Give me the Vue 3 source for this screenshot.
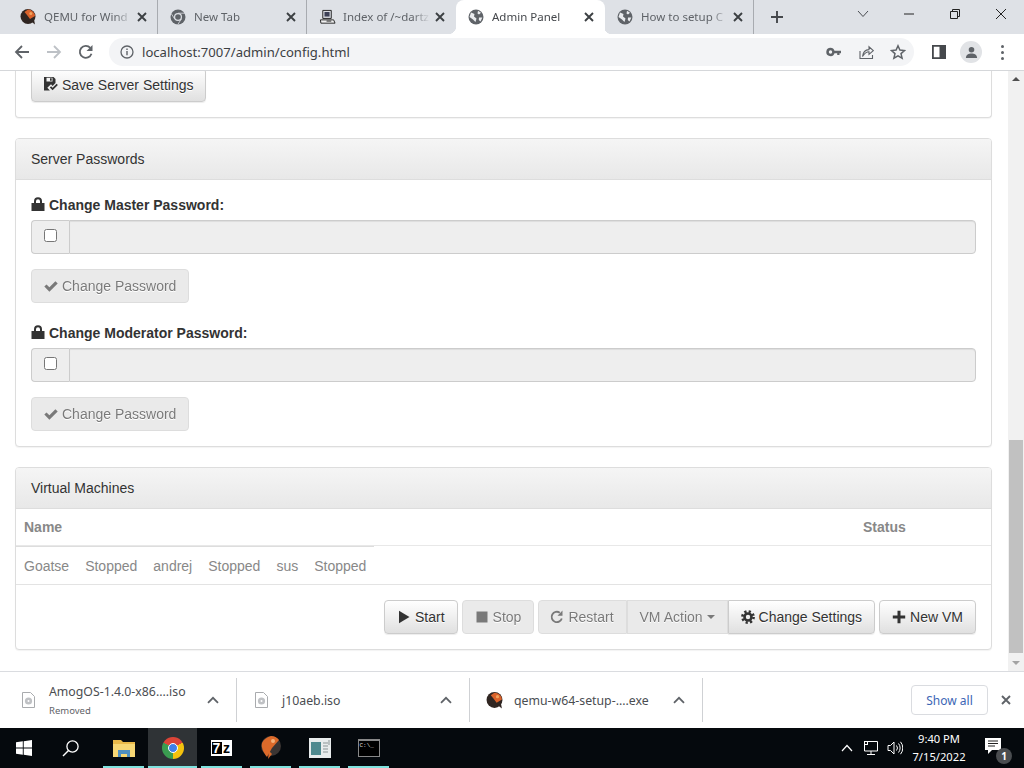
<script setup>
const tabs = [
  { title: 'QEMU for Wind', icon: 'qemu' },
  { title: 'New Tab', icon: 'chromeg' },
  { title: 'Index of /~dartz', icon: 'computer' },
  { title: 'Admin Panel', icon: 'globe', active: true },
  { title: 'How to setup C', icon: 'globe' },
]
const sections = ['Master', 'Moderator']
const cells = ['Goatse', 'Stopped', 'andrej', 'Stopped', 'sus', 'Stopped']
const downloads = [
  { name: 'AmogOS-1.4.0-x86....iso', note: 'Removed', icon: 'disc' },
  { name: 'j10aeb.iso', icon: 'disc' },
  { name: 'qemu-w64-setup-....exe', icon: 'qemu' },
]
</script>

<template>
  <div class="screen">
    <svg class="defs" aria-hidden="true">
      <symbol id="g-lock" viewBox="0 0 14 14"><path fill-rule="evenodd" d="M3 6V4.200a4 4 0 0 1 8 0V6h2.500v8H.5V6zM5 6h4V4.200a2 2 0 0 0-4 0z" fill="currentColor"/></symbol>
      <symbol id="g-check" viewBox="0 0 14 14"><path d="M.3 7.600l2.200-2.200 2.900 2.900L11.400 2.300 13.700 4.600 5.400 12.800z" fill="currentColor"/></symbol>
      <symbol id="g-play" viewBox="0 0 14 14"><path d="M2 .8l10.500 6.200L2 13.200z" fill="currentColor"/></symbol>
      <symbol id="g-stop" viewBox="0 0 14 14"><rect x="1.500" y="1.500" width="11" height="11" fill="currentColor"/></symbol>
      <symbol id="g-refresh" viewBox="0 0 14 14"><path d="M11.800 8.500A5.200 5.200 0 1 1 9.800 2.700" fill="none" stroke="currentColor" stroke-width="1.800"/><path d="M12.500 .6v5.200H7.500z" fill="currentColor"/></symbol>
      <symbol id="g-plus" viewBox="0 0 14 14"><path d="M5.500 .8h3v4.700h4.700v3H8.500v4.700h-3V8.500H.8v-3h4.700z" fill="currentColor"/></symbol>
      <symbol id="g-cog" viewBox="0 0 14 14"><circle cx="7" cy="7" r="3.500" fill="none" stroke="currentColor" stroke-width="2.600"/><circle cx="7" cy="7" r="5.600" fill="none" stroke="currentColor" stroke-width="2.600" stroke-dasharray="2.200 2.200"/></symbol>
      <symbol id="g-save" viewBox="0 0 14 14"><path fill-rule="evenodd" d="M0 0h9.500L11.500 2V6L8.600 8.900 7 7.300 3.300 10.800 5.900 13.500H0zM2.500 .8v3.700h6V.8zM6 1.300h1.700v2.500H6z" fill="currentColor"/><path d="M5.800 10.500l1.300-1.300 1.500 1.500 4-4 1.300 1.300-5.300 5.300z" fill="currentColor"/></symbol>
      <symbol id="i-qemu" viewBox="0 0 16 16"><circle cx="8" cy="7.500" r="7.500" fill="#2f2521"/><path d="M8 .6a7 7 0 0 1 7 6.400L10 10 7 6 4.500 3z" fill="#d9622b"/><circle cx="10.800" cy="4.400" r="1.500" fill="#f2a25c"/><path d="M10.500 12l4.500 3.500-1-5z" fill="#2f2521"/></symbol>
      <symbol id="i-chromeg" viewBox="0 0 16 16"><circle cx="8" cy="8" r="7.500" fill="#5f6368"/><circle cx="8" cy="8" r="4" fill="#dee1e6"/><circle cx="8" cy="8" r="2.800" fill="#5f6368"/><path d="M8 4.200h7M11.300 10L7.800 15.500M4.700 10L1.200 4.500" stroke="#dee1e6" stroke-width=".8"/></symbol>
      <symbol id="i-globe" viewBox="0 0 16 16"><circle cx="8" cy="8" r="7.500" fill="#5f6368"/><path d="M3 3.500L6.500 5 6 7.500 8.500 9.500 7.500 13 5 10.500 1.500 8zM10 1.700l3 2-2 1.800-1.500-1zM11 8.500h3.300L12.500 12.500 10.800 11z" fill="#e9ebee"/></symbol>
      <symbol id="i-computer" viewBox="0 0 18 18"><path d="M4 1.500h9v8.500H4z" fill="#d8dbe2" stroke="#222" stroke-width="1"/><path d="M5.800 3.200h5.400v4.800H5.800z" fill="#3b3f55"/><path d="M1.500 11.500h14l1.500 3.500H2z" fill="#f1f1f1" stroke="#222" stroke-width="1"/><path d="M8 12.800h5" stroke="#222"/></symbol>
      <symbol id="i-disc" viewBox="0 0 13 16"><path d="M.5.500h8l4 4v11H.5z" fill="#fff" stroke="#a9abae"/><circle cx="6.500" cy="9" r="3.600" fill="#bfc1c4"/><circle cx="6.500" cy="9" r="1" fill="#fff"/></symbol>
      <symbol id="w-key" viewBox="0 0 16 16"><path fill-rule="evenodd" d="M4.500 3.800a4.200 4.200 0 0 1 4 3H15v2.500h-1.500v1.700h-2.300V9.300H8.500a4.200 4.200 0 1 1-4-5.500zm0 2.500a1.700 1.700 0 1 0 0 3.400 1.700 1.700 0 0 0 0-3.400z" fill="currentColor"/></symbol>
      <symbol id="w-share" viewBox="0 0 16 16"><path d="M2 7v7.500h12.500V11" fill="none" stroke="currentColor" stroke-width="1.100"/><path d="M4.500 12.500C5 8 7.500 5.800 11 5.600V2.800L15.300 6.600 11 10.300V7.800C8.500 7.800 6.500 9.500 4.500 12.500z" fill="none" stroke="currentColor" stroke-width="1.100"/></symbol>
      <symbol id="w-star" viewBox="0 0 16 16"><path d="M8 1.800l1.900 4.300 4.600.4-3.500 3.100 1.100 4.600L8 11.800 3.900 14.200 5 9.600 1.500 6.500l4.600-.4z" fill="none" stroke="currentColor" stroke-width="1.500"/></symbol>
      <symbol id="w-x" viewBox="0 0 10 10"><path d="M1 1l8 8M9 1l-8 8" stroke="currentColor" stroke-width="1.900" fill="none"/></symbol>
      <symbol id="w-up" viewBox="0 0 12 8"><path d="M1 6.800L6 1.800l5 5" stroke="currentColor" stroke-width="1.800" fill="none"/></symbol>
    </svg>

    <header class="tabstrip">
      <div class="tabs">
        <div v-for="t in tabs" :key="t.title" class="tab" :class="{ active: t.active }">
          <svg v-if="t.icon === 'computer'" class="favicon big"><use href="#i-computer"/></svg>
          <svg v-else class="favicon"><use :href="'#i-' + t.icon"/></svg>
          <span class="tab-title">{{ t.title }}</span>
          <svg class="tab-x"><use href="#w-x"/></svg>
        </div>
      </div>
      <svg class="newtab" viewBox="0 0 14 14"><path d="M7 1v12M1 7h12" stroke="#45484c" stroke-width="1.900"/></svg>
      <div class="winctl">
        <div class="wbtn"><svg viewBox="0 0 12 8" class="w12"><path d="M1 1l5 5.500L11 1" fill="none" stroke="#4a4d52"/></svg></div>
        <div class="wbtn"><svg viewBox="0 0 12 12" class="w12"><path d="M1 6h10" stroke="#222"/></svg></div>
        <div class="wbtn"><svg viewBox="0 0 12 12" class="w12"><path d="M1.500 3.500h7v7h-7zM3.500 3.500v-2h7v7h-2" fill="none" stroke="#222"/></svg></div>
        <div class="wbtn"><svg viewBox="0 0 12 12" class="w12"><path d="M1 1l10 10M11 1L1 11" stroke="#222"/></svg></div>
      </div>
    </header>

    <nav class="toolbar">
      <svg class="nav" viewBox="0 0 16 16"><path d="M15 8H2M8 2L2 8l6 6" fill="none" stroke="#5f6368" stroke-width="1.800"/></svg>
      <svg class="nav" viewBox="0 0 16 16"><path d="M1 8h13M8 2l6 6-6 6" fill="none" stroke="#bdc1c6" stroke-width="1.800"/></svg>
      <svg class="nav" viewBox="0 0 16 16"><path d="M13.500 9.800A6 6 0 1 1 12.300 3.800" fill="none" stroke="#5f6368" stroke-width="1.800"/><path d="M14.500 1v6h-6z" fill="#5f6368"/></svg>
      <div class="omnibox">
        <svg class="info" viewBox="0 0 14 14"><circle cx="7" cy="7" r="6" fill="none" stroke="#5f6368" stroke-width="1.300"/><path d="M7 6v4.300M7 3.500v1.400" stroke="#5f6368" stroke-width="1.400"/></svg>
        <span class="url">localhost:7007/admin/config.html</span>
        <svg class="omni-i"><use href="#w-key"/></svg>
        <svg class="omni-i"><use href="#w-share"/></svg>
        <svg class="omni-i"><use href="#w-star"/></svg>
      </div>
      <svg class="sidepanel" viewBox="0 0 14 14"><path fill-rule="evenodd" d="M0 0h14v14H0zM1.800 1.800v10.400h5.700V1.800z" fill="#45484c"/></svg>
      <div class="avatar"><svg viewBox="0 0 14 14" class="avatar-i"><circle cx="7" cy="4" r="3" fill="#5f6368"/><path d="M1 13c0-3.500 3-4.800 6-4.800s6 1.300 6 4.800z" fill="#5f6368"/></svg></div>
      <div class="kebab"><i></i><i></i><i></i></div>
    </nav>

    <div class="viewport">
      <main class="page">
        <section class="panel panel-cut">
          <div class="body">
            <button class="btn save"><svg class="g"><use href="#g-save"/></svg>Save Server Settings</button>
          </div>
        </section>

        <section class="panel">
          <div class="heading">Server Passwords</div>
          <div class="body">
            <div v-for="s in sections" :key="s" class="field">
              <label class="label"><svg class="g"><use href="#g-lock"/></svg>Change {{ s }} Password:</label>
              <div class="group">
                <span class="addon"><input type="checkbox" /></span>
                <input class="control" type="text" disabled />
              </div>
              <button class="btn off change"><svg class="g"><use href="#g-check"/></svg>Change Password</button>
            </div>
          </div>
        </section>

        <section class="panel last">
          <div class="heading">Virtual Machines</div>
          <div class="thead"><span>Name</span><span class="status">Status</span></div>
          <div class="tbody"><div class="cells"><span v-for="(c, i) in cells" :key="i">{{ c }}</span></div></div>
          <div class="actions">
            <button class="btn"><svg class="g"><use href="#g-play"/></svg>Start</button>
            <button class="btn off"><svg class="g"><use href="#g-stop"/></svg>Stop</button>
            <div class="joined">
              <button class="btn off restart"><svg class="g"><use href="#g-refresh"/></svg>Restart</button>
              <button class="btn off">VM Action<i class="caret"></i></button>
              <button class="btn"><svg class="g"><use href="#g-cog"/></svg>Change Settings</button>
            </div>
            <button class="btn"><svg class="g"><use href="#g-plus"/></svg>New VM</button>
          </div>
        </section>
      </main>
      <aside class="scrollbar">
        <i class="arrow up"></i>
        <div class="track"><div class="thumb"></div></div>
        <i class="arrow down"></i>
      </aside>
    </div>

    <footer class="downloads">
      <div v-for="d in downloads" :key="d.name" class="dl">
        <svg class="dl-icon" :class="d.icon"><use :href="'#i-' + d.icon"/></svg>
        <div class="dl-text" :class="d.icon">
          <div class="dl-name">{{ d.name }}</div>
          <div v-if="d.note" class="dl-note">{{ d.note }}</div>
        </div>
        <svg class="dl-up"><use href="#w-up"/></svg>
      </div>
      <div class="dl-end">
        <div class="showall">Show all</div>
        <svg class="dl-x"><use href="#w-x"/></svg>
      </div>
    </footer>

    <div class="taskbar">
      <svg class="start" viewBox="0 0 16 16"><path d="M0 2.300L6.800 1.300V7.600H0zM7.700 1.200L16 0V7.600H7.700zM0 8.400H6.800V14.700L0 13.700zM7.700 8.400H16V16L7.700 14.800z" fill="#fff"/></svg>
      <svg class="search" viewBox="0 0 18 18"><circle cx="10.500" cy="7.500" r="5.600" fill="none" stroke="#fff" stroke-width="1.300"/><path d="M6.500 11.500L1 17" stroke="#fff" stroke-width="1.500"/></svg>
      <div class="apps">
        <div class="app">
          <svg class="app-i" viewBox="0 0 22 20"><path d="M0 2h8l2 2h12v15H0z" fill="#e9b949"/><path d="M0 6h22v13H0z" fill="#f7d774"/><path d="M5 12h12v7h-3v-3H8v3H5z" fill="#4f8fc0"/></svg>
        </div>
        <div class="app on"><div class="chrome"><div class="chrome-c"></div></div></div>
        <div class="app"><div class="sevenz"><b>7</b><b class="z">z</b></div></div>
        <div class="app">
          <svg class="app-i tall" viewBox="0 0 22 24"><circle cx="11" cy="10" r="10" fill="#3b3533"/><path d="M11 0a10 10 0 0 1 8 4L12 12 7 21C3 16 1 11 2 7 4 3 7 1 11 0z" fill="#dc6a2a"/><circle cx="13" cy="5" r="2" fill="#f4b27a"/><path d="M9 15l-1 8 4-5z" fill="#dc6a2a"/></svg>
        </div>
        <div class="app">
          <svg class="app-i" viewBox="0 0 22 20"><rect width="22" height="20" fill="#e8ecec"/><rect x="2" y="4" width="10" height="13" fill="#4f8a8f"/><path d="M14 5h5M14 8h5M14 11h5M14 14h5M20 2v5" stroke="#8b9596"/></svg>
        </div>
        <div class="app"><div class="cmd">C:\_</div></div>
      </div>
      <div class="tray">
        <svg class="t-chev" viewBox="0 0 12 8"><path d="M1 7l5-5.500L11 7" fill="none" stroke="#fff" stroke-width="1.200"/></svg>
        <svg class="t-net" viewBox="0 0 16 16"><path d="M1.500 1.500h13v9.500h-13zM8 11v3.500M4 14.500h8" fill="none" stroke="#fff"/><rect x="1.500" y="1.500" width="3" height="3" fill="#111" stroke="#fff"/></svg>
        <svg class="t-vol" viewBox="0 0 16 16"><path d="M1 5.500h2.500L7 2v12L3.500 10.500H1z" fill="none" stroke="#fff"/><path d="M9.500 5.500a4 4 0 0 1 0 5M11.500 3.500a7 7 0 0 1 0 9M13.500 1.800a9.500 9.500 0 0 1 0 12.400" fill="none" stroke="#fff"/></svg>
        <div class="clock"><div>9:40 PM</div><div>7/15/2022</div></div>
        <div class="notify">
          <svg class="bubble" viewBox="0 0 16 16"><path d="M0 0h16v12H7l-4 4v-4H0z" fill="#fff"/><path d="M3 3h10M3 5.500h10M3 8h7" stroke="#222"/></svg>
          <span class="badge">1</span>
        </div>
      </div>
    </div>
  </div>
</template>

<style>
html, body { margin: 0; overflow: hidden; }
</style>

<style scoped>
.screen { width: 1024px; height: 768px; display: flex; flex-direction: column; overflow: hidden; background: #fff; font-family: "Liberation Sans", Arial, sans-serif; font-size: 14px; color: #333; }
.defs { width: 0; height: 0; flex: none; }

/* Browser chrome */
.tabstrip { height: 34px; flex: none; display: flex; align-items: center; background: #dee1e6; padding-left: 9px; font-family: "Noto Sans", sans-serif; }
.tabs { display: flex; height: 34px; }
.tab { width: 149px; box-sizing: border-box; height: 34px; display: flex; align-items: center; padding: 0 10px 0 12px; font-size: 11.500px; position: relative; border-right: 1px solid #a8abb0; background-clip: padding-box; }
.tab:first-child { padding-left: 11px; }
.tab:nth-child(3), .tab.active { border-right-color: transparent; }
.tab.active { background: #fff; border-radius: 8px 8px 0 0; }
.tab.active::before, .tab.active::after { content: ""; position: absolute; bottom: 0; width: 8px; height: 8px; }
.tab.active::before { left: -8px; background: radial-gradient(circle at 0 0, transparent 8px, #fff 8.500px); }
.tab.active::after { right: -8px; background: radial-gradient(circle at 100% 0, transparent 8px, #fff 8.500px); }
.favicon { width: 16px; height: 16px; flex: none; margin-right: 8px; }
.favicon.big { width: 17px; height: 17px; margin-right: 7px; }
.tab-title { flex: 1; min-width: 0; white-space: nowrap; overflow: hidden; margin-top: -1px; -webkit-mask-image: linear-gradient(90deg, #000 80%, transparent); mask-image: linear-gradient(90deg, #000 80%, transparent); color: #5f6368; }
.tab.active .tab-title { color: #45484c; }
.tab-x { width: 10px; height: 10px; flex: none; margin-left: 5px; color: #3c4043; }
.newtab { width: 14px; height: 14px; margin-left: 16px; flex: none; }
.winctl { margin-left: auto; display: flex; align-self: flex-start; }
.wbtn { width: 46px; height: 28px; display: flex; align-items: center; justify-content: center; }
.w12 { width: 12px; height: 12px; }

.toolbar { height: 37px; flex: none; box-sizing: border-box; border-bottom: 1px solid #d5d7da; display: flex; align-items: center; padding: 0 0 0 14px; background: #fff; }
.nav { width: 16px; height: 16px; margin-right: 16px; flex: none; }
.omnibox { width: 805px; height: 28px; margin-left: -1px; flex: none; background: #f3f4f6; border-radius: 14px; display: flex; align-items: center; padding-left: 11px; box-sizing: border-box; padding-right: 8px; }
.info { width: 14px; height: 14px; margin-right: 8px; flex: none; }
.url { font-family: "Noto Sans", sans-serif; font-size: 13.100px; color: #3c4043; flex: 1; }
.omni-i { width: 16px; height: 16px; margin-left: 16px; color: #5f6368; flex: none; }
.sidepanel { width: 14px; height: 14px; margin-left: 18px; flex: none; }
.avatar { width: 22px; height: 22px; border-radius: 50%; background: #e1e3e6; margin-left: 14px; flex: none; display: flex; align-items: center; justify-content: center; }
.avatar-i { width: 13px; height: 13px; }
.kebab { margin-left: 19px; display: flex; flex-direction: column; gap: 3px; }
.kebab i { width: 3px; height: 3px; border-radius: 50%; background: #5f6368; display: block; }

/* Page */
.viewport { flex: none; height: 600px; display: flex; overflow: hidden; }
.page { width: 1008px; box-sizing: border-box; padding: 0 16px 0 15px; flex: none; }
.panel { border: 1px solid #ddd; border-radius: 4px; background: #fff; margin-bottom: 20px; box-shadow: 0 1px 1px rgba(0, 0, 0, .05); }
.panel-cut { border-top: 0; border-radius: 0 0 4px 4px; }
.heading { box-sizing: border-box; height: 41px; padding: 10px 15px; line-height: 20px; border-bottom: 1px solid #ddd; background: linear-gradient(#f5f5f5, #e8e8e8); border-radius: 3px 3px 0 0; }
.body { padding: 15px; }
.panel-cut .body { padding-top: 0; }
.btn { font: 14px/20px "Liberation Sans", Arial, sans-serif; box-sizing: border-box; height: 34px; padding: 6px 12px; border: 1px solid #ccc; border-radius: 4px; background: linear-gradient(#fff, #e0e0e0); color: #333; text-shadow: 0 1px 0 #fff; box-shadow: inset 0 1px 0 rgba(255, 255, 255, .15), 0 1px 1px rgba(0, 0, 0, .075); display: inline-flex; align-items: center; white-space: nowrap; flex: none; }
.btn.off { background: #e0e0e0; opacity: .65; box-shadow: none; }
.g { width: 14px; height: 14px; margin-right: 4px; flex: none; color: currentColor; }
.save { margin-top: -3px; display: flex; padding-right: 11px; }
.save .g { margin-top: -3px; }
.label { display: flex; align-items: center; font-weight: 700; line-height: 20px; margin-bottom: 5px; }
.label .g { margin-top: -3px; }
.group { display: flex; height: 34px; }
.addon { box-sizing: border-box; width: 38px; flex: none; display: flex; align-items: center; justify-content: center; background: #eee; border: 1px solid #ccc; border-right: 0; border-radius: 4px 0 0 4px; }
.addon input { margin: 0 0 4px; width: 13px; height: 13px; }
.control { flex: 1; min-width: 0; box-sizing: border-box; background: #eee; border: 1px solid #ccc; border-radius: 0 4px 4px 0; box-shadow: inset 0 1px 1px rgba(0, 0, 0, .075); padding: 6px 12px; }
.change { margin-top: 15px; display: flex; }
.field + .field { margin-top: 20px; }

.last { margin-bottom: 0; }
.thead { display: flex; justify-content: space-between; font-weight: 700; color: #888; line-height: 20px; padding: 8px; height: 37px; box-sizing: border-box; border-bottom: 1px solid #e8e8e8; }
.status { width: 120px; box-sizing: border-box; }
.tbody { border-bottom: 1px solid #e3e3e3; height: 39px; box-sizing: border-box; }
.cells { display: inline-flex; gap: 16px; color: #888; line-height: 20px; padding: 9px 8px 8px; border-top: 1px solid #ddd; }
.actions { display: flex; justify-content: flex-end; gap: 4px; padding: 15px; }
.joined { display: flex; }
.joined .btn { border-radius: 0; }
.joined .btn:first-child { border-radius: 4px 0 0 4px; }
.joined .btn:last-child { border-radius: 0 4px 4px 0; }
.restart { padding-left: 11px; }
.caret { width: 0; height: 0; margin-left: 4px; border-top: 4px solid currentColor; border-left: 4px solid transparent; border-right: 4px solid transparent; }

.scrollbar { width: 16px; flex: none; background: #f1f1f1; display: flex; flex-direction: column; align-items: center; }
.arrow { flex: none; width: 0; height: 0; border-left: 4px solid transparent; border-right: 4px solid transparent; }
.arrow.up { border-bottom: 4px solid #505050; margin: 6px 0; }
.arrow.down { border-top: 4px solid #a3a3a3; margin: 6px 0; }
.track { flex: 1; width: 100%; padding-top: 353px; box-sizing: border-box; }
.thumb { height: 213px; margin: 0 1px; background: #c1c1c1; }

/* Downloads */
.downloads { height: 57px; flex: none; box-sizing: border-box; border-top: 1px solid #dadce0; display: flex; align-items: center; padding-left: 4px; font-family: "Noto Sans", sans-serif; background: #fff; }
.dl { width: 233px; box-sizing: border-box; height: 44px; flex: none; display: flex; align-items: center; border-right: 1px solid #cfd1d4; padding: 0 17px 0 18px; }
.dl-icon { width: 13px; height: 16px; flex: none; margin-right: 14px; }
.dl-icon.qemu { width: 17px; height: 17px; margin-right: 11px; margin-left: -2px; }
.dl-text { flex: 1; min-width: 0; color: #4a4d51; }
.dl-name { font-size: 12.300px; line-height: 17px; white-space: nowrap; }
.dl-note { font-size: 9.500px; line-height: 14px; margin-top: 4px; color: #5f6368; }
.dl-up { width: 12px; height: 8px; color: #5f6368; flex: none; }
.dl-end { flex: 1; display: flex; align-items: center; justify-content: flex-end; }
.showall { width: 77px; height: 30px; box-sizing: border-box; border: 1px solid #dadce0; border-radius: 4px; color: #3d66b5; font-size: 12px; display: flex; align-items: center; justify-content: center; }
.dl-x { width: 10px; height: 10px; margin: 0 13px; color: #5f6368; flex: none; }

/* Taskbar */
.taskbar { height: 40px; flex: none; background: #05090d; display: flex; align-items: center; padding-left: 16px; }
.start { width: 16px; height: 16px; flex: none; }
.search { width: 18px; height: 18px; margin-left: 30px; flex: none; }
.apps { display: flex; align-self: stretch; margin-left: 19px; }
.app { width: 49px; height: 40px; box-sizing: border-box; display: flex; align-items: center; justify-content: center; position: relative; padding-bottom: 1px; }
.app::after { content: ""; position: absolute; left: 4px; right: 4px; bottom: 0; height: 2px; background: #7fe2de; }
.app.on { background: #2f3336; }
.app.on::after { left: 0; right: 0; }
.app-i { width: 22px; height: 20px; }
.app-i.tall { width: 22px; height: 24px; }
.chrome { width: 22px; height: 22px; border-radius: 50%; background: conic-gradient(from -60deg, #db4437 0 120deg, #f4c20d 120deg 240deg, #3a9c50 240deg 360deg); display: flex; align-items: center; justify-content: center; }
.chrome-c { border-radius: 50%; background: #3f7fe8; border: 1.500px solid #fff; box-sizing: content-box; width: 8px; height: 8px; }
.sevenz { width: 21px; height: 16px; background: #fff; display: flex; align-items: center; justify-content: center; font: 700 14px/16px "Liberation Sans", sans-serif; color: #000; }
.sevenz b { background: #000; color: #fff; width: 10px; text-align: center; height: 12px; line-height: 12px; }
.sevenz .z { background: transparent; color: #000; }
.cmd { width: 22px; height: 18px; box-sizing: border-box; border: 1px solid #888; border-top-width: 2px; background: #000; color: #ddd; font: 6px/9px "Liberation Mono", monospace; padding-left: 1px; }
.tray { margin-left: auto; display: flex; align-items: center; color: #fff; }
.t-chev { width: 12px; height: 8px; flex: none; }
.t-net { width: 16px; height: 16px; margin-left: 10px; flex: none; }
.t-vol { width: 16px; height: 16px; margin-left: 8px; flex: none; }
.clock { width: 72px; text-align: center; font: 11.200px/18px "Noto Sans", sans-serif; }
.notify { width: 32px; height: 40px; margin-left: 2px; margin-right: 15px; display: flex; align-items: center; position: relative; }
.bubble { width: 16px; height: 16px; margin-left: 8px; margin-top: -4px; }
.badge { position: absolute; left: 19px; top: 20px; width: 16px; height: 16px; border-radius: 50%; background: #4a4d50; font: 700 10px/16px "Noto Sans", sans-serif; text-align: center; }
</style>
